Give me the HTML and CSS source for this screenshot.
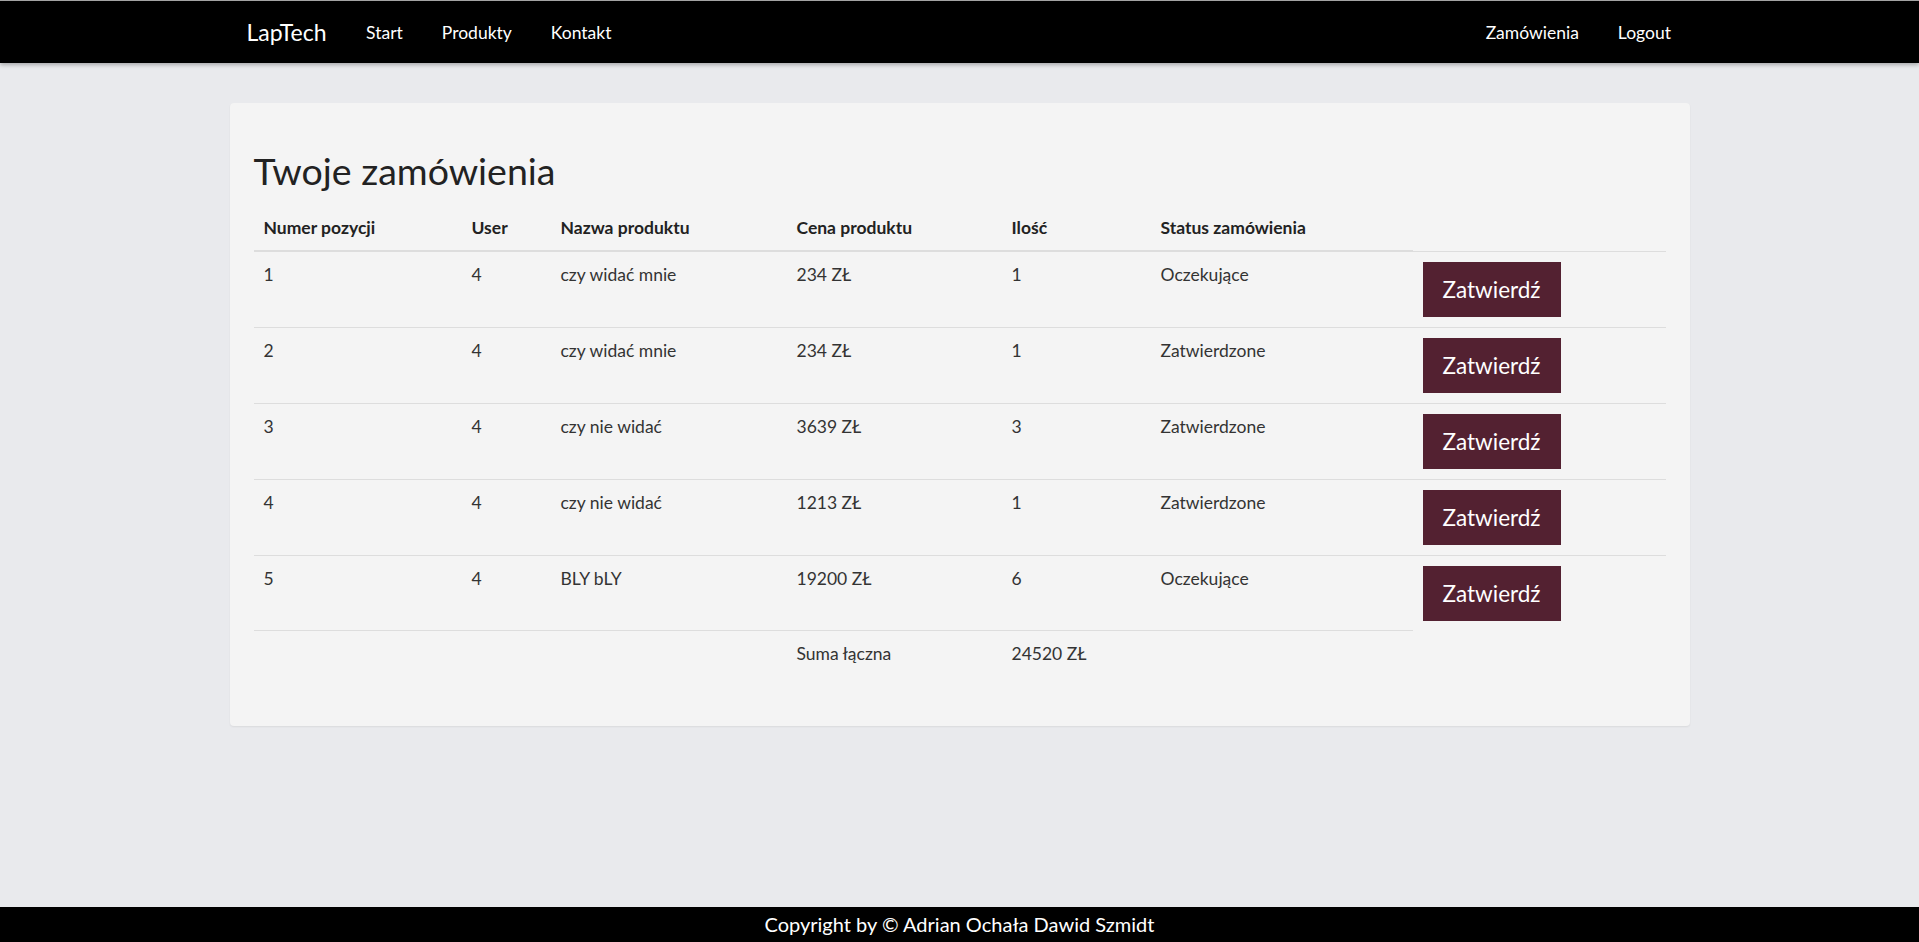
FILE: index.html
```html
<!DOCTYPE html>
<html lang="pl">
<head>
<meta charset="utf-8">
<title>LapTech - Zamówienia</title>
<link rel="stylesheet" href="styles.css">
</head>
<body>
<div class="page">
  <nav class="navbar">
    <div class="nav-container">
      <div class="nav-left">
        <a class="brand" href="#">LapTech</a>
        <a class="nav-link" href="#">Start</a>
        <a class="nav-link" href="#">Produkty</a>
        <a class="nav-link" href="#">Kontakt</a>
      </div>
      <div class="nav-right">
        <a class="nav-link" href="#">Zamówienia</a>
        <a class="nav-link" href="#">Logout</a>
      </div>
    </div>
  </nav>

  <main class="main">
    <section class="card">
      <h1 class="title">Twoje zamówienia</h1>
      <table class="orders">
        <colgroup>
          <col class="c1"><col class="c2"><col class="c3"><col class="c4"><col class="c5"><col class="c6"><col class="c7">
        </colgroup>
        <thead>
          <tr>
            <th>Numer pozycji</th>
            <th>User</th>
            <th>Nazwa produktu</th>
            <th>Cena produktu</th>
            <th>Ilość</th>
            <th>Status zamówienia</th>
          </tr>
        </thead>
        <tbody>
          <tr>
            <td>1</td><td>4</td><td>czy widać mnie</td><td>234 ZŁ</td><td>1</td><td>Oczekujące</td>
            <td><button class="btn-confirm" type="button">Zatwierdź</button></td>
          </tr>
          <tr>
            <td>2</td><td>4</td><td>czy widać mnie</td><td>234 ZŁ</td><td>1</td><td>Zatwierdzone</td>
            <td><button class="btn-confirm" type="button">Zatwierdź</button></td>
          </tr>
          <tr>
            <td>3</td><td>4</td><td>czy nie widać</td><td>3639 ZŁ</td><td>3</td><td>Zatwierdzone</td>
            <td><button class="btn-confirm" type="button">Zatwierdź</button></td>
          </tr>
          <tr>
            <td>4</td><td>4</td><td>czy nie widać</td><td>1213 ZŁ</td><td>1</td><td>Zatwierdzone</td>
            <td><button class="btn-confirm" type="button">Zatwierdź</button></td>
          </tr>
          <tr>
            <td>5</td><td>4</td><td>BLY bLY</td><td>19200 ZŁ</td><td>6</td><td>Oczekujące</td>
            <td><button class="btn-confirm" type="button">Zatwierdź</button></td>
          </tr>
          <tr>
            <td></td><td></td><td></td><td>Suma łączna</td><td>24520 ZŁ</td><td></td>
          </tr>
        </tbody>
      </table>
    </section>
  </main>

  <footer class="footer">Copyright by © Adrian Ochała Dawid Szmidt</footer>
</div>
</body>
</html>
```

FILE: styles.css
```css
* {
  box-sizing: border-box;
}

html, body {
  margin: 0;
  padding: 0;
}

body {
  font-family: Lato, "Open Sans", "Liberation Sans", sans-serif;
  font-size: 17.5px;
  line-height: 25px;
  color: #333;
  background: #e9eaed;
}

.page {
  min-height: 100vh;
  display: flex;
  flex-direction: column;
}

/* Navbar */
.navbar {
  background: #000;
  border-top: 1px solid #a3a3a3;
  height: 63px;
  box-shadow: 0 2px 4px rgba(0, 0, 0, 0.28);
  position: relative;
  z-index: 2;
}

.nav-container {
  width: 1460px;
  margin: 0 auto;
  height: 100%;
  display: flex;
  justify-content: space-between;
  align-items: stretch;
}

.nav-left, .nav-right {
  display: flex;
  align-items: center;
}

.brand {
  color: #fff;
  text-decoration: none;
  font-size: 23px;
  padding: 0 20px 0 17px;
  line-height: 65px;
}

.nav-link {
  color: #fff;
  text-decoration: none;
  font-size: 17.5px;
  padding: 0 19.5px;
  line-height: 65px;
}

.nav-right .nav-link:last-child {
  padding-right: 18.5px;
}

/* Main */
.main {
  flex: 1;
  padding-top: 40px;
}

.card {
  width: 1460px;
  margin: 0 auto;
  background: #f4f4f4;
  border-radius: 4px;
  box-shadow: 0 1px 2px rgba(0, 0, 0, 0.07);
  padding: 46px 24px 25px;
}

.title {
  margin: 0 0 12px;
  font-size: 37.5px;
  line-height: 44px;
  font-weight: 400;
  color: #222;
}

.orders {
  width: 1412px;
  border-collapse: collapse;
  table-layout: fixed;
  margin-bottom: 25px;
}

.c1 { width: 208px; }
.c2 { width: 89px; }
.c3 { width: 236px; }
.c4 { width: 215px; }
.c5 { width: 149px; }
.c6 { width: 262px; }
.c7 { width: 253px; }

.orders th {
  text-align: left;
  font-weight: 700;
  padding: 10px;
  border-bottom: 2px solid #ddd;
  vertical-align: bottom;
  color: #222;
}

.orders td {
  padding: 10px;
  border-top: 1px solid #ddd;
  vertical-align: top;
  color: #333;
}

.btn-confirm {
  display: block;
  border: 0;
  border-radius: 0;
  background: #532131;
  color: #fff;
  font-family: Lato, "Open Sans", "Liberation Sans", sans-serif;
  font-size: 22.5px;
  line-height: 31px;
  padding: 12px 20px;
  height: 55px;
  cursor: pointer;
}

/* Footer */
.footer {
  background: #000;
  color: #fff;
  text-align: center;
  height: 35px;
  line-height: 35px;
  font-size: 20px;
}
```
